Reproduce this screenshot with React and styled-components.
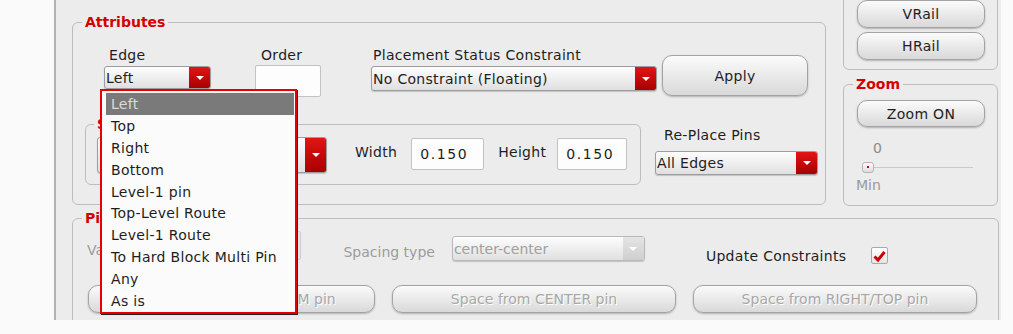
import React from "react";
import styled, { createGlobalStyle } from "styled-components";

const GlobalStyle = createGlobalStyle`
  * { box-sizing: border-box; }
  body {
    margin: 0;
    background: #fafafa;
    font-family: "DejaVu Sans", "Noto Sans", sans-serif;
  }
`;

const Screen = styled.div`
  width: 1013px;
  height: 334px;
  overflow: hidden;
`;

const Window = styled.div`
  margin-left: 54px;
  width: 947px;
  height: 320px;
  border-left: 2px solid #b3b3b3;
  background: #ececec;
  padding: 0 2px 0 16px;
  overflow: hidden;
  display: flex;
  flex-direction: column;
`;

const TopRow = styled.div`
  display: flex;
  align-items: flex-start;
  gap: 17px;
  height: 206px;
  flex-shrink: 0;
`;

const Group = styled.fieldset`
  margin: ${(p) => p.$margin || "0"};
  padding: ${(p) => p.$pad || "0 12px"};
  width: ${(p) => p.$w}px;
  height: ${(p) => p.$h}px;
  border: 1px solid #bdbdbd;
  border-radius: 6px;
  min-width: 0;
  flex-shrink: 0;
`;

const Title = styled.legend`
  margin-left: -3px;
  padding: 0 3px;
  color: #d40000;
  font-weight: bold;
  font-size: 14px;
  line-height: 16px;
`;

const Row = styled.div`
  display: flex;
  align-items: flex-start;
  margin-top: ${(p) => p.$mt || 0}px;
`;

const Field = styled.div`
  position: relative;
  display: flex;
  flex-direction: column;
  width: ${(p) => p.$w}px;
  margin-left: ${(p) => p.$ml || 0}px;
  margin-top: ${(p) => p.$mt || 0}px;
  flex-shrink: 0;
`;

const Label = styled.span`
  display: block;
  font-size: 14px;
  line-height: 16px;
  letter-spacing: ${(p) => (p.$tight ? "0" : "0.3px")};
  color: ${(p) => (p.$disabled ? "#9c9c9c" : "#1e1e1e")};
  padding-left: ${(p) => p.$indent || 0}px;
  margin-left: ${(p) => p.$ml || 0}px;
  margin-top: ${(p) => p.$mt || 0}px;
  white-space: nowrap;
  flex-shrink: 0;
`;

const Combo = styled.div`
  display: flex;
  width: ${(p) => p.$w}px;
  height: ${(p) => p.$h}px;
  margin-top: ${(p) => p.$mt || 0}px;
  margin-left: ${(p) => p.$ml || 0}px;
  border: 1px solid ${(p) => (p.$disabled ? "#b9b9b9" : "#9d9d9d")};
  border-radius: 3px;
  background: linear-gradient(#fdfdfd, #e0e0e0);
  box-shadow: 0 1px 1px rgba(0, 0, 0, 0.18);
  flex-shrink: 0;
  overflow: hidden;
`;

const ComboText = styled.span`
  flex: 1;
  padding-left: 1px;
  font-size: 14px;
  letter-spacing: ${(p) => (p.$disabled ? "0" : "0.3px")};
  color: ${(p) => (p.$disabled ? "#a0a0a0" : "#1e1e1e")};
  display: flex;
  align-items: center;
  white-space: nowrap;
  overflow: hidden;
`;

const ArrowBox = styled.span`
  width: 21px;
  display: flex;
  align-items: center;
  justify-content: center;
  background: ${(p) =>
    p.$disabled
      ? "linear-gradient(#e4e4e4, #cfcfcf)"
      : "linear-gradient(#e21414, #a80000)"};
  &::after {
    content: "";
    border-left: 4px solid transparent;
    border-right: 4px solid transparent;
    border-top: 4px solid #fff;
  }
`;

const Input = styled.div`
  width: ${(p) => p.$w}px;
  height: ${(p) => p.$h}px;
  margin-top: ${(p) => p.$mt || 0}px;
  margin-left: ${(p) => p.$ml || 0}px;
  border: 1px solid ${(p) => (p.$disabled ? "#cdcdcd" : "#c2c2c2")};
  border-radius: 2px;
  background: ${(p) => (p.$disabled ? "#e4e4e4" : "#fdfdfd")};
  font-size: 14px;
  letter-spacing: 1.6px;
  color: #1e1e1e;
  display: flex;
  align-items: center;
  padding-left: 8px;
  flex-shrink: 0;
`;

const Button = styled.div`
  width: ${(p) => p.$w}px;
  height: ${(p) => p.$h}px;
  margin-top: ${(p) => p.$mt || 0}px;
  margin-left: ${(p) => p.$ml || 0}px;
  border: 1px solid #a3a3a3;
  border-radius: 10px;
  background: linear-gradient(#fbfbfb, #d9d9d9);
  box-shadow: 0 1px 2px rgba(0, 0, 0, 0.25);
  display: flex;
  align-items: center;
  justify-content: center;
  font-size: 14px;
  letter-spacing: ${(p) => (p.$disabled ? "0" : "0.3px")};
  color: ${(p) => (p.$disabled ? "#a8a8a8" : "#1e1e1e")};
  text-shadow: ${(p) => (p.$disabled ? "1px 1px 0 #fff" : "none")};
  white-space: nowrap;
  flex-shrink: 0;
`;

const RightColumn = styled.div`
  display: flex;
  flex-direction: column;
  width: 155px;
  margin-top: -20px;
  flex-shrink: 0;
`;

const Stack = styled.div`
  display: flex;
  flex-direction: column;
  gap: ${(p) => (p.$gap === undefined ? 4 : p.$gap)}px;
`;

const SliderValue = styled.span`
  font-size: 14px;
  line-height: 16px;
  color: #8a8a8a;
  margin: 13px 0 0 17px;
`;

const SliderTrack = styled.div`
  display: flex;
  align-items: center;
  width: 111px;
  height: 12px;
  margin: 5px 0 0 6px;
`;

const Handle = styled.span`
  width: 12px;
  height: 11px;
  border: 1px solid #b5b5b5;
  border-radius: 3px;
  background: linear-gradient(#fdfdfd, #dcdcdc);
  display: flex;
  align-items: center;
  justify-content: center;
  &::after {
    content: "";
    width: 2px;
    height: 2px;
    background: #d00000;
  }
`;

const TrackLine = styled.span`
  flex: 1;
  height: 1px;
  background: #cacaca;
`;

const SliderMin = styled.span`
  font-size: 14px;
  line-height: 16px;
  color: #9a9a9a;
  margin-top: 4px;
`;

const Check = styled.span`
  width: 17px;
  height: 17px;
  margin: 16px 0 0 25px;
  border: 1px solid #a9a9a9;
  border-radius: 2px;
  background: linear-gradient(#ffffff, #e4e4e4);
  display: flex;
  align-items: center;
  justify-content: center;
  flex-shrink: 0;
`;

const Dropdown = styled.div`
  position: absolute;
  top: 100%;
  left: -4px;
  width: 197px;
  border: 2px solid #e60000;
  background: #fbfbfb;
  padding: 2px 1px 0 4px;
  box-shadow: 1px 1px 0 #222;
  z-index: 10;
`;

const Item = styled.div`
  height: 21.9px;
  line-height: 22px;
  padding-left: 5px;
  font-size: 14px;
  letter-spacing: 0.3px;
  color: ${(p) => (p.$active ? "#dcdcdc" : "#1e1e1e")};
  background: ${(p) => (p.$active ? "#7a7a7a" : "transparent")};
  white-space: nowrap;
`;

const edgeOptions = [
  "Left",
  "Top",
  "Right",
  "Bottom",
  "Level-1 pin",
  "Top-Level Route",
  "Level-1 Route",
  "To Hard Block Multi Pin",
  "Any",
  "As is",
];

const ComboBox = ({ text, w, h, mt, ml, disabled }) => (
  <Combo $w={w} $h={h} $mt={mt} $ml={ml} $disabled={disabled}>
    <ComboText $disabled={disabled}>{text}</ComboText>
    <ArrowBox $disabled={disabled} />
  </Combo>
);

const App = () => {
  return (
    <Screen>
      <GlobalStyle />
      <Window>
        <TopRow>
          <Group $w={754} $h={191} $margin="14px 0 0 0" $pad="17px 6px 0 12px">
            <Title>Attributes</Title>
            <Row>
              <Field $w={107} $ml={19}>
                <Label $indent={5}>Edge</Label>
                <ComboBox text="Left" w={107} h={23} mt={3} />
                <Dropdown>
                  {edgeOptions.map((o, i) => (
                    <Item key={o} $active={i === 0}>
                      {o}
                    </Item>
                  ))}
                </Dropdown>
              </Field>
              <Field $w={66} $ml={44}>
                <Label $indent={6}>Order</Label>
                <Input $w={66} $h={32} $mt={2} />
              </Field>
              <Field $w={286} $ml={50}>
                <Label $indent={2}>Placement Status Constraint</Label>
                <ComboBox text="No Constraint (Floating)" w={286} h={25} mt={3} />
              </Field>
              <Button $w={146} $h={41} $mt={8} $ml={5}>
                Apply
              </Button>
            </Row>
            <Row $mt={19}>
              <Group $w={556} $h={69} $pad="0 11px">
                <Title>Size</Title>
                <Row>
                  <ComboBox text="Rectangle" w={230} h={36} mt={5} />
                  <Label $ml={28} $mt={12}>Width</Label>
                  <Input $w={73} $h={32} $mt={6} $ml={14}>0.150</Input>
                  <Label $ml={14} $mt={12}>Height</Label>
                  <Input $w={70} $h={32} $mt={6} $ml={11}>0.150</Input>
                </Row>
              </Group>
              <Field $w={163} $ml={14} $mt={11}>
                <Label $indent={9}>Re-Place Pins</Label>
                <ComboBox text="All Edges" w={163} h={24} mt={8} />
              </Field>
            </Row>
          </Group>

          <RightColumn>
            <Group $w={155} $h={90} $pad="19px 11px 0 13px">
              <Stack>
                <Button $w={128} $h={28}>VRail</Button>
                <Button $w={128} $h={28}>HRail</Button>
              </Stack>
            </Group>
            <Group $w={155} $h={130} $margin="6px 0 0 0" $pad="8px 11px 0 12px">
              <Title>Zoom</Title>
              <Stack>
                <Button $w={128} $h={27} $ml={1}>Zoom ON</Button>
              </Stack>
              <Stack $gap={0}>
                <SliderValue>0</SliderValue>
                <SliderTrack>
                  <Handle />
                  <TrackLine />
                </SliderTrack>
                <SliderMin>Min</SliderMin>
              </Stack>
            </Group>
          </RightColumn>
        </TopRow>

        <Group $w={927} $h={140} $margin="4px 0 0 0" $pad="5px 12px 0 12px">
          <Title>Pin Spacing</Title>
          <Row>
            <Label $disabled $tight $ml={2} $mt={11}>Value</Label>
            <Input $disabled $w={66} $h={29} $ml={110} />
            <Label $disabled $tight $ml={42} $mt={13}>Spacing type</Label>
            <ComboBox disabled text="center-center" w={193} h={25} mt={5} ml={17} />
            <Label $ml={61} $mt={17}>Update Constraints</Label>
            <Check>
              <svg width="13" height="12" viewBox="0 0 13 12">
                <path d="M1.5 6.5 L5 10 L11.5 2" fill="none" stroke="#d00000" strokeWidth="3" />
              </svg>
            </Check>
          </Row>
          <Row $mt={21}>
            <Button $disabled $w={287} $h={28} $ml={3}>Space from LEFT/BOTTOM pin</Button>
            <Button $disabled $w={284} $h={28} $ml={17}>Space from CENTER pin</Button>
            <Button $disabled $w={284} $h={28} $ml={17}>Space from RIGHT/TOP pin</Button>
          </Row>
        </Group>
      </Window>
    </Screen>
  );
};

export default App;
